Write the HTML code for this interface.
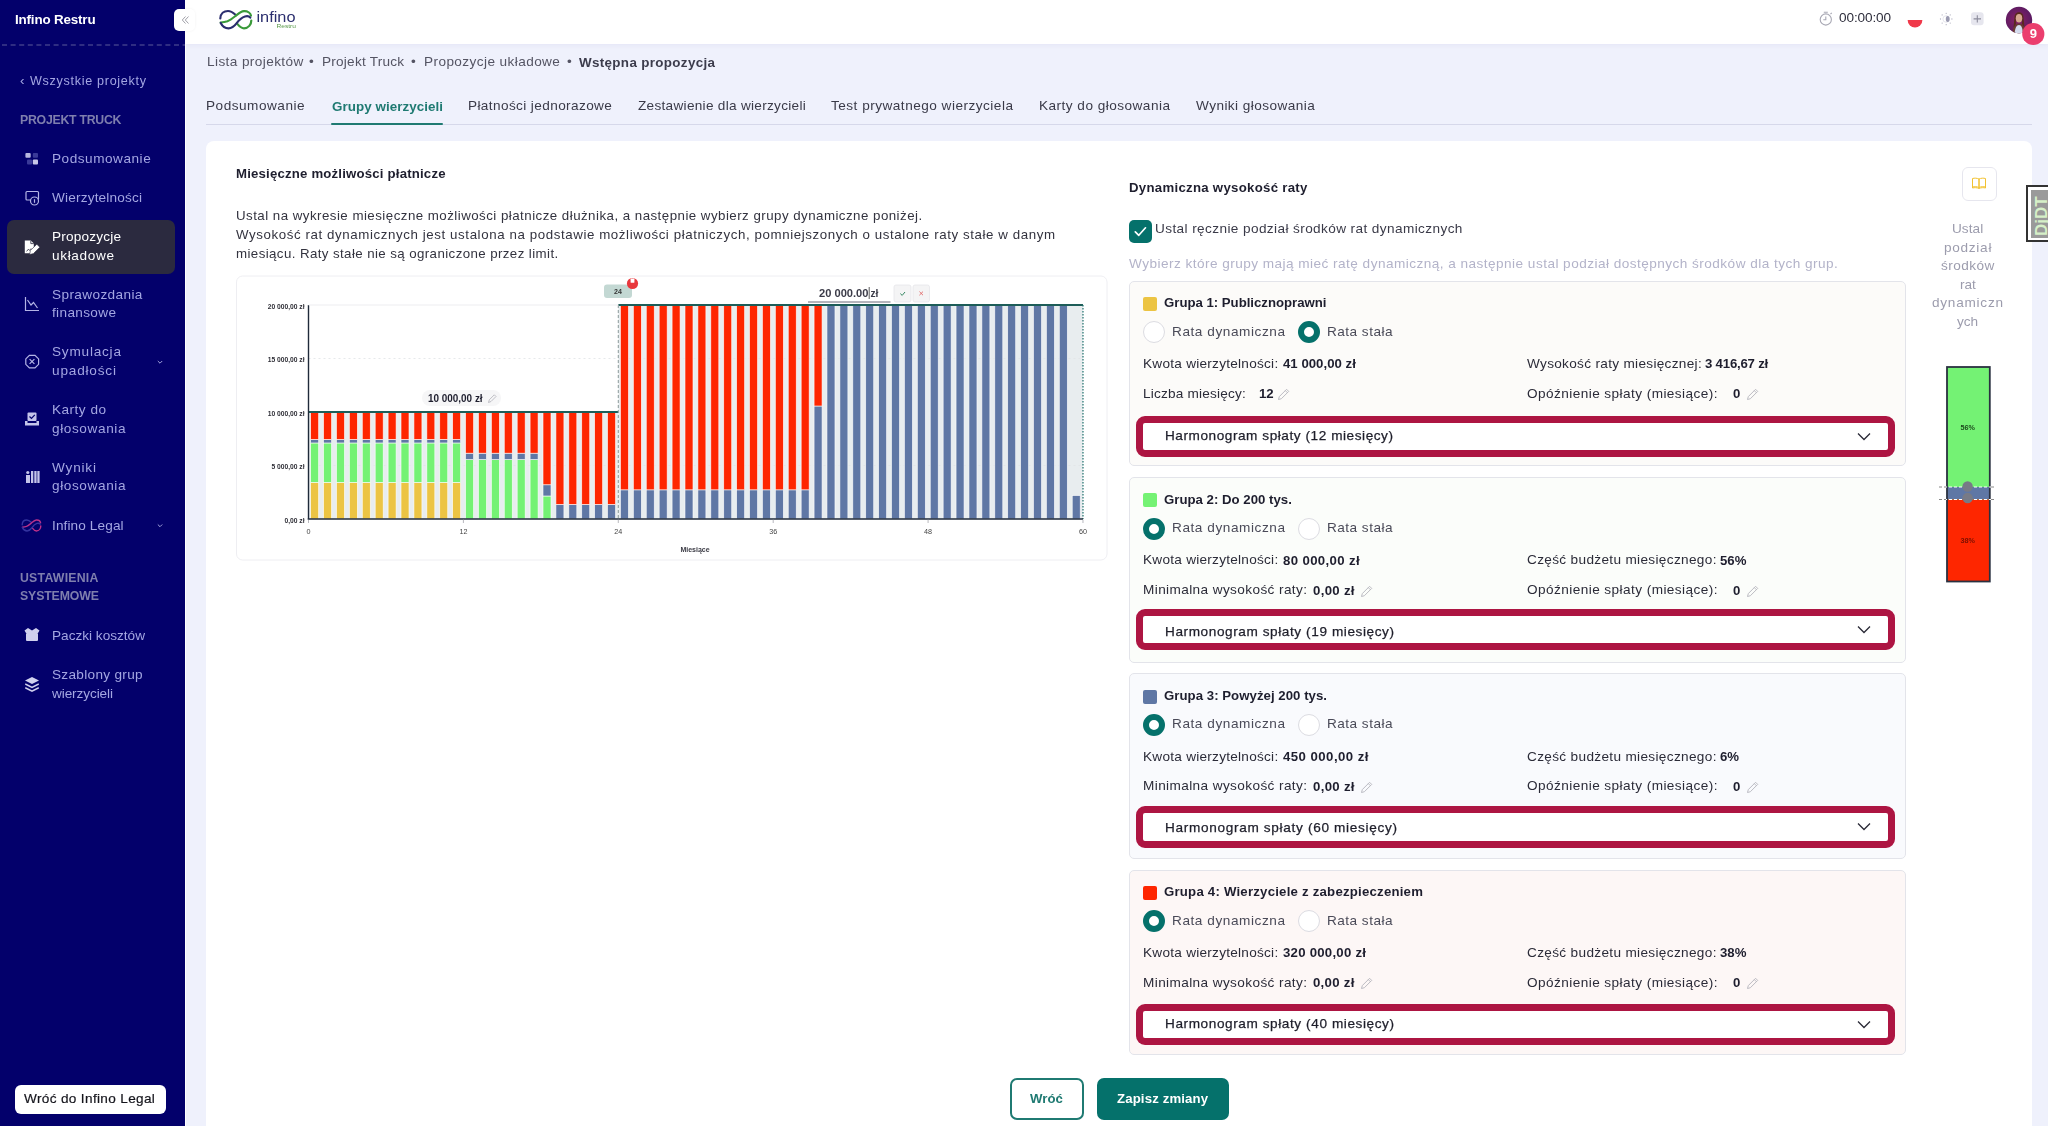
<!DOCTYPE html>
<html lang="pl"><head><meta charset="utf-8"><title>Infino Restru</title>
<style>
html,body{margin:0;padding:0;width:2048px;height:1134px;overflow:hidden;background:#fff;font-family:"Liberation Sans",sans-serif;}
.t{position:absolute;white-space:nowrap;will-change:transform;}
.abs{position:absolute;}
svg{will-change:transform;}
#sidebar{position:absolute;left:0;top:0;width:185px;height:1126px;background:#03006b;}
#lav{position:absolute;left:186px;top:0;width:1862px;height:1126px;background:#eff1fc;}
#header{position:absolute;left:185px;top:0;width:1863px;height:44px;background:#fff;box-shadow:0 1px 5px rgba(90,70,150,0.07);}
#card{position:absolute;left:206px;top:141px;width:1826px;height:1000px;background:#fff;border-radius:8px;}
.gcard{position:absolute;left:1129px;width:776.5px;height:185.5px;border:1px solid #e3e4ea;border-radius:5px;box-sizing:border-box;}
.harm{position:absolute;left:1136px;width:759px;height:41.2px;border:7.6px solid #ad1542;border-radius:9px;box-sizing:border-box;background:#fff;}
.radio{position:absolute;width:22px;height:22px;border-radius:50%;box-sizing:border-box;}
.roff{border:1.2px solid #dcdce2;background:#fff;}
.ron{border:6px solid #05716b;background:#fff;}
.sq{position:absolute;left:1143.3px;width:14px;height:14px;border-radius:2px;}
</style></head>
<body>
<div id="lav"></div>
<div id="header"></div>
<div id="sidebar"></div>
<!-- sidebar dashed separator -->
<svg class="abs" style="left:0;top:0" width="186" height="60">
  <line x1="2" y1="45" x2="185" y2="45" stroke="#5c5a9a" stroke-width="1.2" stroke-dasharray="5 3.6"/>
</svg>
<!-- active item -->
<div class="abs" style="left:7.4px;top:220px;width:168px;height:53.6px;background:#2b2a3f;border-radius:7px;"></div>
<!-- collapse btn -->
<div class="abs" style="left:174px;top:9.3px;width:21px;height:21.5px;background:#fff;border-radius:5px;box-shadow:0 0 3px rgba(0,0,0,0.06)"></div>
<svg class="abs" style="left:178px;top:13px" width="14" height="14"><path d="M7.5 3.5 L4.3 7 L7.5 10.5 M10.5 3.5 L7.3 7 L10.5 10.5" fill="none" stroke="#a0a0a8" stroke-width="1"/></svg>

<!-- sidebar icons -->
<svg class="abs" style="left:0;top:0" width="185" height="720">
  <g fill="#b4b4e6">
    <!-- podsumowanie grid -->
    <rect x="25.4" y="152.9" width="5.3" height="4.8" rx="1" fill="#b8b8e0"/>
    <rect x="32.8" y="152.9" width="5.2" height="4.8" rx="1" fill="#3a3a98"/>
    <rect x="27" y="159.6" width="5" height="5" rx="1" fill="#3a3a98"/>
    <rect x="32.8" y="159.6" width="5.2" height="4.9" rx="1" fill="#c8c8e8"/>
  </g>
  <g fill="none" stroke="#b4b4e6" stroke-width="1.2">
    <!-- wierzytelnosci -->
    <rect x="26" y="191.5" width="12.5" height="8.5" rx="1"/>
    <circle cx="34.5" cy="201" r="4" fill="#03006b"/>
    <line x1="34.5" y1="199.2" x2="34.5" y2="202.8"/>
    <!-- sprawozdania chart -->
    <path d="M25.5 297 V310.5 H39 M27.5 300 L31 305 L33.5 302.5 L37.5 308"/>
    <!-- symulacja x in circle -->
    <path d="M29.4 355.3 H35 L38.6 358.9 V364.3 L35 367.9 H29.4 L25.8 364.3 V358.9 Z"/>
    <path d="M29.6 359.1 L34.4 363.9 M34.4 359.1 L29.6 363.9"/>
    <!-- chevrons -->
    <path d="M157.8 361 L160 363.2 L162.2 361" stroke-width="0.9"/>
    <path d="M157.8 524.5 L160 526.7 L162.2 524.5" stroke-width="0.9"/>
  </g>
  <!-- karty -->
  <g fill="#c4c4ea">
    <path d="M25 421 H27.5 V423 H36.5 V421 H39 V425.5 H25 Z"/>
    <rect x="27.5" y="412.5" width="9" height="8.5" rx="1"/>
  </g>
  <path d="M29.5 416.5 L31.5 418.5 L34.8 414.8" fill="none" stroke="#03006b" stroke-width="1.2"/>
  <!-- wyniki -->
  <g fill="#c4c4ea">
    <circle cx="27.8" cy="472.5" r="1.6"/>
    <rect x="26" y="475" width="4" height="8"/>
    <rect x="31" y="471" width="2.3" height="12"/>
    <rect x="34.3" y="471" width="2.3" height="12"/>
    <rect x="37.3" y="471" width="2.3" height="12"/>
  </g>
  <!-- infino legal -->
  <g transform="translate(19.0 516.1) scale(0.6 0.636)" fill="none" stroke-width="2.3" stroke-linecap="round">
    <path d="M36.3 15.5 C36.3 19.5 33.5 23.3 29 23.3 C26 23.3 24 21 22.3 18.9" stroke="#c2308a"/>
    <path d="M5.3 13.5 C5.5 8.5 9 6 13 6 C16.5 6 18.5 8 21 10.2" stroke="#3434a0"/>
    <path d="M5.7 17.5 C8 17.3 10 17 12.5 16.2 C15.5 15 18 13 20.5 11 C23 9 25.5 6.5 29 6.2 C32.5 6 35.5 8 36 10.6" stroke="#b8308a"/>
    <path d="M5.7 18 C7.5 21.5 10 23.3 13.5 23.3 C17 23.3 19.5 21 21.5 18.4 C24 15 27 12.3 30 11.5 C32 11 34 11 35.3 12.6" stroke="#3434a0"/>
  </g>
  <!-- paczki -->
  <g fill="#d0d0ee">
    <path d="M24.5 630.5 L28 628 L32 630.5 L36 628 L39.5 630.5 L38 633 H26 Z"/>
    <rect x="26" y="633" width="12" height="8" rx="1"/>
  </g>
  <!-- szablony layers -->
  <g fill="#d0d0ee">
    <path d="M32 677 L39 680.5 L32 684 L25 680.5 Z"/>
    <path d="M25.5 683.3 L32 686.6 L38.5 683.3 L39 684.8 L32 688.3 L25 684.8 Z"/>
    <path d="M25.5 687 L32 690.3 L38.5 687 L39 688.5 L32 692 L25 688.5 Z"/>
  </g>
  <!-- propozycje icon (white) -->
  <path d="M24.8 240.6 H30.8 L33.8 243.6 V253.2 H24.8 Z" fill="#fff"/>
  <path d="M30.8 240.6 V243.6 H33.8" fill="none" stroke="#2b2a3f" stroke-width="0.8"/>
  <path d="M26.6 251.4 L28.4 249.2 L29.6 250.4 L31.2 248.4" fill="none" stroke="#2b2a3f" stroke-width="0.8"/>
  <path d="M30.4 250.6 L36.8 244.2 L39.8 247.2 L33.4 253.6 L29.6 254.6 Z" fill="#fff" stroke="#2b2a3f" stroke-width="0.6"/>
</svg>

<!-- wroc do infino legal button -->
<div class="abs" style="left:14.6px;top:1085.4px;width:151px;height:28.3px;background:#fff;border-radius:6px;"></div>

<!-- logo -->
<svg class="abs" style="left:215px;top:5px" width="90" height="30">
  <g fill="none" stroke-width="2.2" stroke-linecap="round">
  <path d="M36.3 15.5 C36.3 19.5 33.5 23.3 29 23.3 C26 23.3 24 21 22.3 18.9" stroke="#3a9a3a"/>
  <path d="M5.3 13.5 C5.5 8.5 9 6 13 6 C16.5 6 18.5 8 21 10.2" stroke="#2b2e6e"/>
  <path d="M5.7 17.5 C8 17.3 10 17 12.5 16.2 C15.5 15 18 13 20.5 11 C23 9 25.5 6.5 29 6.2 C32.5 6 35.5 8 36 10.6" stroke="#3a9a3a"/>
  <path d="M5.7 18 C7.5 21.5 10 23.3 13.5 23.3 C17 23.3 19.5 21 21.5 18.4 C24 15 27 12.3 30 11.5 C32 11 34 11 35.3 12.6" stroke="#2b2e6e"/>
  </g>
  <text x="41.5" y="16.8" font-family="Liberation Sans" font-size="15.2" fill="#2b2e6e" textLength="39" lengthAdjust="spacingAndGlyphs">infino</text>
  <text x="61.5" y="23.2" font-family="Liberation Sans" font-size="5.8" fill="#5a9a4a" textLength="19.5" lengthAdjust="spacingAndGlyphs">Restru</text>
</svg>

<!-- top right icons -->
<svg class="abs" style="left:1810px;top:0" width="238" height="50">
  <g fill="none" stroke="#a8a8b4" stroke-width="1.1">
    <circle cx="15.8" cy="19.5" r="5.6"/>
    <path d="M15.8 16.5 V19.8 H13.3 M13.8 12.2 H17.8 M20.5 14 L21.8 12.8"/>
  </g>
  
  <path d="M97.6 20 A7.4 7.4 0 0 0 112.4 20 Z" fill="#f0394a"/>
  <circle cx="136.2" cy="19" r="3.3" fill="none" stroke="#e2e2ea" stroke-width="0.9"/>
  <ellipse cx="137.7" cy="19" rx="1.9" ry="2.9" fill="#9a9ab0"/>
  <g fill="#b4b4c4"><circle cx="141.90" cy="19.00" r="0.65"/><circle cx="140.23" cy="23.03" r="0.65"/><circle cx="136.20" cy="24.70" r="0.65"/><circle cx="132.17" cy="23.03" r="0.65"/><circle cx="130.50" cy="19.00" r="0.65"/><circle cx="132.17" cy="14.97" r="0.65"/><circle cx="136.20" cy="13.30" r="0.65"/><circle cx="140.23" cy="14.97" r="0.65"/></g>
  <rect x="161" y="12.3" width="12.6" height="13" rx="3" fill="#e6e6ee"/>
  <path d="M167.3 15.2 V22.6 M163.6 18.9 H171" stroke="#8c8c9c" stroke-width="1.1"/>
  <!-- avatar -->
  <defs>
    <radialGradient id="avg" cx="0.45" cy="0.5" r="0.6">
      <stop offset="0" stop-color="#8a2266"/><stop offset="1" stop-color="#561a62"/>
    </radialGradient>
    <clipPath id="avc"><circle cx="209" cy="20" r="13.2"/></clipPath>
  </defs>
  <circle cx="209" cy="20" r="13.2" fill="url(#avg)"/>
  <g clip-path="url(#avc)">
    <path d="M202.5 34 C202.5 27 204.5 23.5 209 23.5 C213.5 23.5 215.5 27 215.5 34 Z" fill="#6a3a34"/>
    <path d="M204.5 34 C205 28 206.5 25 209 25 C211.5 25 212.5 28 213 34 Z" fill="#d4dcee"/>
    <path d="M204.5 17 C204.5 10.5 213.5 10.5 213.5 17 L214.5 27.5 L212 24 L212.2 17.5 C211 14 207 14 205.8 17.5 L206 24 L203.5 27.5 Z" fill="#5a2a1e"/>
    <ellipse cx="209" cy="18.2" rx="3.2" ry="4.2" fill="#d8a890"/>
  </g>
  <circle cx="223.3" cy="34" r="11.1" fill="#eb3e6e"/>
  <text x="223.3" y="38.3" text-anchor="middle" font-family="Liberation Sans" font-weight="700" font-size="13" fill="#fff">9</text>
</svg>

<!-- main card -->
<div id="card"></div>
<!-- tab line -->
<div class="abs" style="left:206px;top:123.5px;width:1826px;height:1px;background:#d6d8ea;"></div>
<div class="abs" style="left:331.4px;top:122.5px;width:111.3px;height:2px;background:#1f7a72;border-radius:1px;"></div>

<svg class='chart' width='2048' height='1134' viewBox='0 0 2048 1134' style='position:absolute;left:0;top:0;pointer-events:none'>
<rect x='236.5' y='276.0' width='870.5' height='284.0' rx='6' fill='#fff' stroke='#eeeef2' stroke-width='1'/>
<rect x='308.5' y='412.0' width='309.792' height='107.0' fill='#e8edef'/>
<rect x='618.2919999999999' y='305.0' width='464.688' height='214.0' fill='#e8edef'/>
<line x1='308.5' y1='465.5' x2='1082.98' y2='465.5' stroke='#dfe3e6' stroke-width='0.8' stroke-dasharray='2 3'/>
<line x1='308.5' y1='358.5' x2='1082.98' y2='358.5' stroke='#dfe3e6' stroke-width='0.8' stroke-dasharray='2 3'/>
<rect x='310.65' y='482.44' width='8.0' height='36.56' fill='#ecc443' stroke='#ffffff' stroke-width='0.7' stroke-opacity='0.85'/>
<rect x='310.65' y='442.96' width='8.0' height='39.48' fill='#74f274' stroke='#ffffff' stroke-width='0.7' stroke-opacity='0.85'/>
<rect x='310.65' y='439.43' width='8.0' height='3.53' fill='#5f77a5' stroke='#ffffff' stroke-width='0.7' stroke-opacity='0.85'/>
<rect x='310.65' y='412.00' width='8.0' height='27.43' fill='#fe2600' stroke='#ffffff' stroke-width='0.7' stroke-opacity='0.85'/>
<rect x='323.56' y='482.44' width='8.0' height='36.56' fill='#ecc443' stroke='#ffffff' stroke-width='0.7' stroke-opacity='0.85'/>
<rect x='323.56' y='442.96' width='8.0' height='39.48' fill='#74f274' stroke='#ffffff' stroke-width='0.7' stroke-opacity='0.85'/>
<rect x='323.56' y='439.43' width='8.0' height='3.53' fill='#5f77a5' stroke='#ffffff' stroke-width='0.7' stroke-opacity='0.85'/>
<rect x='323.56' y='412.00' width='8.0' height='27.43' fill='#fe2600' stroke='#ffffff' stroke-width='0.7' stroke-opacity='0.85'/>
<rect x='336.47' y='482.44' width='8.0' height='36.56' fill='#ecc443' stroke='#ffffff' stroke-width='0.7' stroke-opacity='0.85'/>
<rect x='336.47' y='442.96' width='8.0' height='39.48' fill='#74f274' stroke='#ffffff' stroke-width='0.7' stroke-opacity='0.85'/>
<rect x='336.47' y='439.43' width='8.0' height='3.53' fill='#5f77a5' stroke='#ffffff' stroke-width='0.7' stroke-opacity='0.85'/>
<rect x='336.47' y='412.00' width='8.0' height='27.43' fill='#fe2600' stroke='#ffffff' stroke-width='0.7' stroke-opacity='0.85'/>
<rect x='349.38' y='482.44' width='8.0' height='36.56' fill='#ecc443' stroke='#ffffff' stroke-width='0.7' stroke-opacity='0.85'/>
<rect x='349.38' y='442.96' width='8.0' height='39.48' fill='#74f274' stroke='#ffffff' stroke-width='0.7' stroke-opacity='0.85'/>
<rect x='349.38' y='439.43' width='8.0' height='3.53' fill='#5f77a5' stroke='#ffffff' stroke-width='0.7' stroke-opacity='0.85'/>
<rect x='349.38' y='412.00' width='8.0' height='27.43' fill='#fe2600' stroke='#ffffff' stroke-width='0.7' stroke-opacity='0.85'/>
<rect x='362.29' y='482.44' width='8.0' height='36.56' fill='#ecc443' stroke='#ffffff' stroke-width='0.7' stroke-opacity='0.85'/>
<rect x='362.29' y='442.96' width='8.0' height='39.48' fill='#74f274' stroke='#ffffff' stroke-width='0.7' stroke-opacity='0.85'/>
<rect x='362.29' y='439.43' width='8.0' height='3.53' fill='#5f77a5' stroke='#ffffff' stroke-width='0.7' stroke-opacity='0.85'/>
<rect x='362.29' y='412.00' width='8.0' height='27.43' fill='#fe2600' stroke='#ffffff' stroke-width='0.7' stroke-opacity='0.85'/>
<rect x='375.19' y='482.44' width='8.0' height='36.56' fill='#ecc443' stroke='#ffffff' stroke-width='0.7' stroke-opacity='0.85'/>
<rect x='375.19' y='442.96' width='8.0' height='39.48' fill='#74f274' stroke='#ffffff' stroke-width='0.7' stroke-opacity='0.85'/>
<rect x='375.19' y='439.43' width='8.0' height='3.53' fill='#5f77a5' stroke='#ffffff' stroke-width='0.7' stroke-opacity='0.85'/>
<rect x='375.19' y='412.00' width='8.0' height='27.43' fill='#fe2600' stroke='#ffffff' stroke-width='0.7' stroke-opacity='0.85'/>
<rect x='388.10' y='482.44' width='8.0' height='36.56' fill='#ecc443' stroke='#ffffff' stroke-width='0.7' stroke-opacity='0.85'/>
<rect x='388.10' y='442.96' width='8.0' height='39.48' fill='#74f274' stroke='#ffffff' stroke-width='0.7' stroke-opacity='0.85'/>
<rect x='388.10' y='439.43' width='8.0' height='3.53' fill='#5f77a5' stroke='#ffffff' stroke-width='0.7' stroke-opacity='0.85'/>
<rect x='388.10' y='412.00' width='8.0' height='27.43' fill='#fe2600' stroke='#ffffff' stroke-width='0.7' stroke-opacity='0.85'/>
<rect x='401.01' y='482.44' width='8.0' height='36.56' fill='#ecc443' stroke='#ffffff' stroke-width='0.7' stroke-opacity='0.85'/>
<rect x='401.01' y='442.96' width='8.0' height='39.48' fill='#74f274' stroke='#ffffff' stroke-width='0.7' stroke-opacity='0.85'/>
<rect x='401.01' y='439.43' width='8.0' height='3.53' fill='#5f77a5' stroke='#ffffff' stroke-width='0.7' stroke-opacity='0.85'/>
<rect x='401.01' y='412.00' width='8.0' height='27.43' fill='#fe2600' stroke='#ffffff' stroke-width='0.7' stroke-opacity='0.85'/>
<rect x='413.92' y='482.44' width='8.0' height='36.56' fill='#ecc443' stroke='#ffffff' stroke-width='0.7' stroke-opacity='0.85'/>
<rect x='413.92' y='442.96' width='8.0' height='39.48' fill='#74f274' stroke='#ffffff' stroke-width='0.7' stroke-opacity='0.85'/>
<rect x='413.92' y='439.43' width='8.0' height='3.53' fill='#5f77a5' stroke='#ffffff' stroke-width='0.7' stroke-opacity='0.85'/>
<rect x='413.92' y='412.00' width='8.0' height='27.43' fill='#fe2600' stroke='#ffffff' stroke-width='0.7' stroke-opacity='0.85'/>
<rect x='426.83' y='482.44' width='8.0' height='36.56' fill='#ecc443' stroke='#ffffff' stroke-width='0.7' stroke-opacity='0.85'/>
<rect x='426.83' y='442.96' width='8.0' height='39.48' fill='#74f274' stroke='#ffffff' stroke-width='0.7' stroke-opacity='0.85'/>
<rect x='426.83' y='439.43' width='8.0' height='3.53' fill='#5f77a5' stroke='#ffffff' stroke-width='0.7' stroke-opacity='0.85'/>
<rect x='426.83' y='412.00' width='8.0' height='27.43' fill='#fe2600' stroke='#ffffff' stroke-width='0.7' stroke-opacity='0.85'/>
<rect x='439.73' y='482.44' width='8.0' height='36.56' fill='#ecc443' stroke='#ffffff' stroke-width='0.7' stroke-opacity='0.85'/>
<rect x='439.73' y='442.96' width='8.0' height='39.48' fill='#74f274' stroke='#ffffff' stroke-width='0.7' stroke-opacity='0.85'/>
<rect x='439.73' y='439.43' width='8.0' height='3.53' fill='#5f77a5' stroke='#ffffff' stroke-width='0.7' stroke-opacity='0.85'/>
<rect x='439.73' y='412.00' width='8.0' height='27.43' fill='#fe2600' stroke='#ffffff' stroke-width='0.7' stroke-opacity='0.85'/>
<rect x='452.64' y='482.44' width='8.0' height='36.56' fill='#ecc443' stroke='#ffffff' stroke-width='0.7' stroke-opacity='0.85'/>
<rect x='452.64' y='442.96' width='8.0' height='39.48' fill='#74f274' stroke='#ffffff' stroke-width='0.7' stroke-opacity='0.85'/>
<rect x='452.64' y='439.43' width='8.0' height='3.53' fill='#5f77a5' stroke='#ffffff' stroke-width='0.7' stroke-opacity='0.85'/>
<rect x='452.64' y='412.00' width='8.0' height='27.43' fill='#fe2600' stroke='#ffffff' stroke-width='0.7' stroke-opacity='0.85'/>
<rect x='465.55' y='459.62' width='8.0' height='59.38' fill='#74f274' stroke='#ffffff' stroke-width='0.7' stroke-opacity='0.85'/>
<rect x='465.55' y='453.19' width='8.0' height='6.42' fill='#5f77a5' stroke='#ffffff' stroke-width='0.7' stroke-opacity='0.85'/>
<rect x='465.55' y='412.00' width='8.0' height='41.20' fill='#fe2600' stroke='#ffffff' stroke-width='0.7' stroke-opacity='0.85'/>
<rect x='478.46' y='459.62' width='8.0' height='59.38' fill='#74f274' stroke='#ffffff' stroke-width='0.7' stroke-opacity='0.85'/>
<rect x='478.46' y='453.19' width='8.0' height='6.42' fill='#5f77a5' stroke='#ffffff' stroke-width='0.7' stroke-opacity='0.85'/>
<rect x='478.46' y='412.00' width='8.0' height='41.20' fill='#fe2600' stroke='#ffffff' stroke-width='0.7' stroke-opacity='0.85'/>
<rect x='491.37' y='459.62' width='8.0' height='59.38' fill='#74f274' stroke='#ffffff' stroke-width='0.7' stroke-opacity='0.85'/>
<rect x='491.37' y='453.19' width='8.0' height='6.42' fill='#5f77a5' stroke='#ffffff' stroke-width='0.7' stroke-opacity='0.85'/>
<rect x='491.37' y='412.00' width='8.0' height='41.20' fill='#fe2600' stroke='#ffffff' stroke-width='0.7' stroke-opacity='0.85'/>
<rect x='504.27' y='459.62' width='8.0' height='59.38' fill='#74f274' stroke='#ffffff' stroke-width='0.7' stroke-opacity='0.85'/>
<rect x='504.27' y='453.19' width='8.0' height='6.42' fill='#5f77a5' stroke='#ffffff' stroke-width='0.7' stroke-opacity='0.85'/>
<rect x='504.27' y='412.00' width='8.0' height='41.20' fill='#fe2600' stroke='#ffffff' stroke-width='0.7' stroke-opacity='0.85'/>
<rect x='517.18' y='459.62' width='8.0' height='59.38' fill='#74f274' stroke='#ffffff' stroke-width='0.7' stroke-opacity='0.85'/>
<rect x='517.18' y='453.19' width='8.0' height='6.42' fill='#5f77a5' stroke='#ffffff' stroke-width='0.7' stroke-opacity='0.85'/>
<rect x='517.18' y='412.00' width='8.0' height='41.20' fill='#fe2600' stroke='#ffffff' stroke-width='0.7' stroke-opacity='0.85'/>
<rect x='530.09' y='459.62' width='8.0' height='59.38' fill='#74f274' stroke='#ffffff' stroke-width='0.7' stroke-opacity='0.85'/>
<rect x='530.09' y='453.19' width='8.0' height='6.42' fill='#5f77a5' stroke='#ffffff' stroke-width='0.7' stroke-opacity='0.85'/>
<rect x='530.09' y='412.00' width='8.0' height='41.20' fill='#fe2600' stroke='#ffffff' stroke-width='0.7' stroke-opacity='0.85'/>
<rect x='543.00' y='496.00' width='8.0' height='23.00' fill='#74f274' stroke='#ffffff' stroke-width='0.7' stroke-opacity='0.85'/>
<rect x='543.00' y='484.76' width='8.0' height='11.23' fill='#5f77a5' stroke='#ffffff' stroke-width='0.7' stroke-opacity='0.85'/>
<rect x='543.00' y='412.00' width='8.0' height='72.76' fill='#fe2600' stroke='#ffffff' stroke-width='0.7' stroke-opacity='0.85'/>
<rect x='555.91' y='504.41' width='8.0' height='14.59' fill='#5f77a5' stroke='#ffffff' stroke-width='0.7' stroke-opacity='0.85'/>
<rect x='555.91' y='412.00' width='8.0' height='92.41' fill='#fe2600' stroke='#ffffff' stroke-width='0.7' stroke-opacity='0.85'/>
<rect x='568.81' y='504.41' width='8.0' height='14.59' fill='#5f77a5' stroke='#ffffff' stroke-width='0.7' stroke-opacity='0.85'/>
<rect x='568.81' y='412.00' width='8.0' height='92.41' fill='#fe2600' stroke='#ffffff' stroke-width='0.7' stroke-opacity='0.85'/>
<rect x='581.72' y='504.41' width='8.0' height='14.59' fill='#5f77a5' stroke='#ffffff' stroke-width='0.7' stroke-opacity='0.85'/>
<rect x='581.72' y='412.00' width='8.0' height='92.41' fill='#fe2600' stroke='#ffffff' stroke-width='0.7' stroke-opacity='0.85'/>
<rect x='594.63' y='504.41' width='8.0' height='14.59' fill='#5f77a5' stroke='#ffffff' stroke-width='0.7' stroke-opacity='0.85'/>
<rect x='594.63' y='412.00' width='8.0' height='92.41' fill='#fe2600' stroke='#ffffff' stroke-width='0.7' stroke-opacity='0.85'/>
<rect x='607.54' y='504.41' width='8.0' height='14.59' fill='#5f77a5' stroke='#ffffff' stroke-width='0.7' stroke-opacity='0.85'/>
<rect x='607.54' y='412.00' width='8.0' height='92.41' fill='#fe2600' stroke='#ffffff' stroke-width='0.7' stroke-opacity='0.85'/>
<rect x='620.45' y='489.82' width='8.0' height='29.18' fill='#5f77a5' stroke='#ffffff' stroke-width='0.7' stroke-opacity='0.85'/>
<rect x='620.45' y='305.00' width='8.0' height='184.82' fill='#fe2600' stroke='#ffffff' stroke-width='0.7' stroke-opacity='0.85'/>
<rect x='633.35' y='489.82' width='8.0' height='29.18' fill='#5f77a5' stroke='#ffffff' stroke-width='0.7' stroke-opacity='0.85'/>
<rect x='633.35' y='305.00' width='8.0' height='184.82' fill='#fe2600' stroke='#ffffff' stroke-width='0.7' stroke-opacity='0.85'/>
<rect x='646.26' y='489.82' width='8.0' height='29.18' fill='#5f77a5' stroke='#ffffff' stroke-width='0.7' stroke-opacity='0.85'/>
<rect x='646.26' y='305.00' width='8.0' height='184.82' fill='#fe2600' stroke='#ffffff' stroke-width='0.7' stroke-opacity='0.85'/>
<rect x='659.17' y='489.82' width='8.0' height='29.18' fill='#5f77a5' stroke='#ffffff' stroke-width='0.7' stroke-opacity='0.85'/>
<rect x='659.17' y='305.00' width='8.0' height='184.82' fill='#fe2600' stroke='#ffffff' stroke-width='0.7' stroke-opacity='0.85'/>
<rect x='672.08' y='489.82' width='8.0' height='29.18' fill='#5f77a5' stroke='#ffffff' stroke-width='0.7' stroke-opacity='0.85'/>
<rect x='672.08' y='305.00' width='8.0' height='184.82' fill='#fe2600' stroke='#ffffff' stroke-width='0.7' stroke-opacity='0.85'/>
<rect x='684.99' y='489.82' width='8.0' height='29.18' fill='#5f77a5' stroke='#ffffff' stroke-width='0.7' stroke-opacity='0.85'/>
<rect x='684.99' y='305.00' width='8.0' height='184.82' fill='#fe2600' stroke='#ffffff' stroke-width='0.7' stroke-opacity='0.85'/>
<rect x='697.89' y='489.82' width='8.0' height='29.18' fill='#5f77a5' stroke='#ffffff' stroke-width='0.7' stroke-opacity='0.85'/>
<rect x='697.89' y='305.00' width='8.0' height='184.82' fill='#fe2600' stroke='#ffffff' stroke-width='0.7' stroke-opacity='0.85'/>
<rect x='710.80' y='489.82' width='8.0' height='29.18' fill='#5f77a5' stroke='#ffffff' stroke-width='0.7' stroke-opacity='0.85'/>
<rect x='710.80' y='305.00' width='8.0' height='184.82' fill='#fe2600' stroke='#ffffff' stroke-width='0.7' stroke-opacity='0.85'/>
<rect x='723.71' y='489.82' width='8.0' height='29.18' fill='#5f77a5' stroke='#ffffff' stroke-width='0.7' stroke-opacity='0.85'/>
<rect x='723.71' y='305.00' width='8.0' height='184.82' fill='#fe2600' stroke='#ffffff' stroke-width='0.7' stroke-opacity='0.85'/>
<rect x='736.62' y='489.82' width='8.0' height='29.18' fill='#5f77a5' stroke='#ffffff' stroke-width='0.7' stroke-opacity='0.85'/>
<rect x='736.62' y='305.00' width='8.0' height='184.82' fill='#fe2600' stroke='#ffffff' stroke-width='0.7' stroke-opacity='0.85'/>
<rect x='749.53' y='489.82' width='8.0' height='29.18' fill='#5f77a5' stroke='#ffffff' stroke-width='0.7' stroke-opacity='0.85'/>
<rect x='749.53' y='305.00' width='8.0' height='184.82' fill='#fe2600' stroke='#ffffff' stroke-width='0.7' stroke-opacity='0.85'/>
<rect x='762.43' y='489.82' width='8.0' height='29.18' fill='#5f77a5' stroke='#ffffff' stroke-width='0.7' stroke-opacity='0.85'/>
<rect x='762.43' y='305.00' width='8.0' height='184.82' fill='#fe2600' stroke='#ffffff' stroke-width='0.7' stroke-opacity='0.85'/>
<rect x='775.34' y='489.82' width='8.0' height='29.18' fill='#5f77a5' stroke='#ffffff' stroke-width='0.7' stroke-opacity='0.85'/>
<rect x='775.34' y='305.00' width='8.0' height='184.82' fill='#fe2600' stroke='#ffffff' stroke-width='0.7' stroke-opacity='0.85'/>
<rect x='788.25' y='489.82' width='8.0' height='29.18' fill='#5f77a5' stroke='#ffffff' stroke-width='0.7' stroke-opacity='0.85'/>
<rect x='788.25' y='305.00' width='8.0' height='184.82' fill='#fe2600' stroke='#ffffff' stroke-width='0.7' stroke-opacity='0.85'/>
<rect x='801.16' y='489.82' width='8.0' height='29.18' fill='#5f77a5' stroke='#ffffff' stroke-width='0.7' stroke-opacity='0.85'/>
<rect x='801.16' y='305.00' width='8.0' height='184.82' fill='#fe2600' stroke='#ffffff' stroke-width='0.7' stroke-opacity='0.85'/>
<rect x='814.07' y='406.01' width='8.0' height='112.99' fill='#5f77a5' stroke='#ffffff' stroke-width='0.7' stroke-opacity='0.85'/>
<rect x='814.07' y='305.00' width='8.0' height='101.01' fill='#fe2600' stroke='#ffffff' stroke-width='0.7' stroke-opacity='0.85'/>
<rect x='826.97' y='305.00' width='8.0' height='214.00' fill='#5f77a5' stroke='#ffffff' stroke-width='0.7' stroke-opacity='0.85'/>
<rect x='839.88' y='305.00' width='8.0' height='214.00' fill='#5f77a5' stroke='#ffffff' stroke-width='0.7' stroke-opacity='0.85'/>
<rect x='852.79' y='305.00' width='8.0' height='214.00' fill='#5f77a5' stroke='#ffffff' stroke-width='0.7' stroke-opacity='0.85'/>
<rect x='865.70' y='305.00' width='8.0' height='214.00' fill='#5f77a5' stroke='#ffffff' stroke-width='0.7' stroke-opacity='0.85'/>
<rect x='878.61' y='305.00' width='8.0' height='214.00' fill='#5f77a5' stroke='#ffffff' stroke-width='0.7' stroke-opacity='0.85'/>
<rect x='891.51' y='305.00' width='8.0' height='214.00' fill='#5f77a5' stroke='#ffffff' stroke-width='0.7' stroke-opacity='0.85'/>
<rect x='904.42' y='305.00' width='8.0' height='214.00' fill='#5f77a5' stroke='#ffffff' stroke-width='0.7' stroke-opacity='0.85'/>
<rect x='917.33' y='305.00' width='8.0' height='214.00' fill='#5f77a5' stroke='#ffffff' stroke-width='0.7' stroke-opacity='0.85'/>
<rect x='930.24' y='305.00' width='8.0' height='214.00' fill='#5f77a5' stroke='#ffffff' stroke-width='0.7' stroke-opacity='0.85'/>
<rect x='943.15' y='305.00' width='8.0' height='214.00' fill='#5f77a5' stroke='#ffffff' stroke-width='0.7' stroke-opacity='0.85'/>
<rect x='956.05' y='305.00' width='8.0' height='214.00' fill='#5f77a5' stroke='#ffffff' stroke-width='0.7' stroke-opacity='0.85'/>
<rect x='968.96' y='305.00' width='8.0' height='214.00' fill='#5f77a5' stroke='#ffffff' stroke-width='0.7' stroke-opacity='0.85'/>
<rect x='981.87' y='305.00' width='8.0' height='214.00' fill='#5f77a5' stroke='#ffffff' stroke-width='0.7' stroke-opacity='0.85'/>
<rect x='994.78' y='305.00' width='8.0' height='214.00' fill='#5f77a5' stroke='#ffffff' stroke-width='0.7' stroke-opacity='0.85'/>
<rect x='1007.69' y='305.00' width='8.0' height='214.00' fill='#5f77a5' stroke='#ffffff' stroke-width='0.7' stroke-opacity='0.85'/>
<rect x='1020.59' y='305.00' width='8.0' height='214.00' fill='#5f77a5' stroke='#ffffff' stroke-width='0.7' stroke-opacity='0.85'/>
<rect x='1033.50' y='305.00' width='8.0' height='214.00' fill='#5f77a5' stroke='#ffffff' stroke-width='0.7' stroke-opacity='0.85'/>
<rect x='1046.41' y='305.00' width='8.0' height='214.00' fill='#5f77a5' stroke='#ffffff' stroke-width='0.7' stroke-opacity='0.85'/>
<rect x='1059.32' y='305.00' width='8.0' height='214.00' fill='#5f77a5' stroke='#ffffff' stroke-width='0.7' stroke-opacity='0.85'/>
<rect x='1072.23' y='495.57' width='8.0' height='23.43' fill='#5f77a5' stroke='#ffffff' stroke-width='0.7' stroke-opacity='0.85'/>
<line x1='308.5' y1='412.0' x2='618.2919999999999' y2='412.0' stroke='#1d5d58' stroke-width='2.2'/>
<line x1='618.2919999999999' y1='305.0' x2='1082.98' y2='305.0' stroke='#1d5d58' stroke-width='2.2'/>
<line x1='618.2919999999999' y1='305.0' x2='618.2919999999999' y2='519.0' stroke='#8a9a9a' stroke-width='1' stroke-dasharray='3 2'/>
<line x1='1082.98' y1='305.0' x2='1082.98' y2='519.0' stroke='#1d6f6a' stroke-width='1.2' stroke-dasharray='1.5 1.5'/>
<line x1='308.5' y1='305.0' x2='308.5' y2='519.6' stroke='#1f2a3a' stroke-width='1.4'/>
<line x1='307.8' y1='519.0' x2='1082.98' y2='519.0' stroke='#1f2a3a' stroke-width='1.3'/>
<line x1='308.5' y1='305.0' x2='618.2919999999999' y2='305.0' stroke='#ededf0' stroke-width='1'/>
<text x='304.5' y='522.9' text-anchor='end' font-family='Liberation Sans' font-weight='700' font-size='6.7' fill='#2e2e36'>0,00 zł</text>
<text x='304.5' y='469.4' text-anchor='end' font-family='Liberation Sans' font-weight='700' font-size='6.7' fill='#2e2e36'>5 000,00 zł</text>
<text x='304.5' y='415.9' text-anchor='end' font-family='Liberation Sans' font-weight='700' font-size='6.7' fill='#2e2e36'>10 000,00 zł</text>
<text x='304.5' y='362.4' text-anchor='end' font-family='Liberation Sans' font-weight='700' font-size='6.7' fill='#2e2e36'>15 000,00 zł</text>
<text x='304.5' y='308.9' text-anchor='end' font-family='Liberation Sans' font-weight='700' font-size='6.7' fill='#2e2e36'>20 000,00 zł</text>
<text x='308.5' y='533.8' text-anchor='middle' font-family='Liberation Sans' font-size='7.2' fill='#444'>0</text>
<line x1='308.5' y1='519.5' x2='308.5' y2='523.0' stroke='#9a9aa2' stroke-width='0.7'/>
<text x='463.4' y='533.8' text-anchor='middle' font-family='Liberation Sans' font-size='7.2' fill='#444'>12</text>
<line x1='463.39599999999996' y1='519.5' x2='463.39599999999996' y2='523.0' stroke='#9a9aa2' stroke-width='0.7'/>
<text x='618.3' y='533.8' text-anchor='middle' font-family='Liberation Sans' font-size='7.2' fill='#444'>24</text>
<line x1='618.2919999999999' y1='519.5' x2='618.2919999999999' y2='523.0' stroke='#9a9aa2' stroke-width='0.7'/>
<text x='773.2' y='533.8' text-anchor='middle' font-family='Liberation Sans' font-size='7.2' fill='#444'>36</text>
<line x1='773.188' y1='519.5' x2='773.188' y2='523.0' stroke='#9a9aa2' stroke-width='0.7'/>
<text x='928.1' y='533.8' text-anchor='middle' font-family='Liberation Sans' font-size='7.2' fill='#444'>48</text>
<line x1='928.084' y1='519.5' x2='928.084' y2='523.0' stroke='#9a9aa2' stroke-width='0.7'/>
<text x='1083.0' y='533.8' text-anchor='middle' font-family='Liberation Sans' font-size='7.2' fill='#444'>60</text>
<line x1='1082.98' y1='519.5' x2='1082.98' y2='523.0' stroke='#9a9aa2' stroke-width='0.7'/>
<text x='695' y='551.8' text-anchor='middle' font-family='Liberation Sans' font-weight='700' font-size='7' fill='#3a3a44'>Miesiące</text>
<rect x='422' y='390' width='79' height='16' rx='8' fill='#f6f6f7'/>
<text x='428' y='401.8' font-family='Liberation Sans' font-weight='700' font-size='10.2' fill='#1e1e2e' textLength='54.6' lengthAdjust='spacingAndGlyphs'>10 000,00 zł</text>
<path d='M488.5 402.5 L489.3 399.8 L494.3 394.8 L496 396.5 L491 401.5 Z' fill='none' stroke='#b0b0b8' stroke-width='0.8'/>
<rect x='604' y='284.5' width='28' height='13.5' rx='3' fill='#c3d8d3'/>
<text x='618' y='294' text-anchor='middle' font-family='Liberation Sans' font-weight='700' font-size='7' fill='#333'>24</text>
<circle cx='632.5' cy='283.5' r='5.6' fill='#e8383d'/>
<rect x='630.6' y='278.6' width='3.8' height='4.2' rx='0.6' fill='#fff'/>
<line x1='808' y1='302' x2='890.5' y2='302' stroke='#6b6b78' stroke-width='1'/>
<text x='819' y='297' font-family='Liberation Sans' font-weight='700' font-size='10.2' fill='#3b3b48' textLength='49.5' lengthAdjust='spacingAndGlyphs'>20 000.00</text>
<line x1='869.2' y1='287' x2='869.2' y2='299' stroke='#333' stroke-width='0.8'/>
<text x='870.4' y='297' font-family='Liberation Sans' font-weight='700' font-size='10.2' fill='#3b3b48'>zł</text>
<rect x='894' y='285' width='17' height='17' rx='2' fill='#f4f4f5' stroke='#e6e6ea' stroke-width='0.8'/>
<path d='M900.3 293.6 L902.2 295.4 L905 292' fill='none' stroke='#1f7a50' stroke-width='0.9'/>
<rect x='913' y='285' width='16.5' height='17' rx='2' fill='#f4f4f5' stroke='#e6e6ea' stroke-width='0.8'/>
<path d='M919.4 291.6 L923 295.2 M923 291.6 L919.4 295.2' fill='none' stroke='#e05a5a' stroke-width='0.8'/>
</svg>

<!-- book button -->
<div class="abs" style="left:1962px;top:167px;width:35px;height:34px;border:1px solid #e6e6ee;border-radius:6px;box-sizing:border-box;background:#fff;"></div>
<svg class="abs" style="left:1970px;top:175px" width="20" height="18">
  <path d="M2.5 3.5 C4.5 3 7 3 9 4 V12.5 C7 11.5 4.5 11.5 2.5 12 Z M9 4 C11 3 13.5 3 15.5 3.5 V12 C13.5 11.5 11 11.5 9 12.5 Z M2.5 12 V13 C4.5 12.5 7 12.5 9 13.5 C11 12.5 13.5 12.5 15.5 13 V12" fill="none" stroke="#f2c230" stroke-width="1"/>
</svg>

<!-- checkbox -->
<div class="abs" style="left:1129px;top:220px;width:22.5px;height:22.5px;background:#05716b;border-radius:5px;"></div>
<svg class="abs" style="left:1129px;top:220px" width="23" height="23"><path d="M6.3 11.8 L9.8 15.3 L16.5 7.8" fill="none" stroke="#fff" stroke-width="1.7" stroke-linecap="round" stroke-linejoin="round"/></svg>

<div class='gcard' style='top:280.7px;background:#fcfbf9'></div>
<div class='sq' style='top:297.0px;background:#ecc443'></div>
<div class='radio roff' style='left:1143px;top:321.2px'></div>
<div class='radio ron' style='left:1297.7px;top:321.2px'></div>
<div class='harm' style='top:415.6px'></div>
<svg class='abs' style='left:1855px;top:430.6px' width='18' height='12'><path d='M3 2.5 L9 8.5 L15 2.5' fill='none' stroke='#2a2a36' stroke-width='1.3'/></svg>
<svg class='abs' style='left:1276.5px;top:387.2px' width='14' height='14'><path d='M1.5 12.5 L2.3 9.6 L9.6 2.3 L11.7 4.4 L4.4 11.7 Z M8.3 3.6 L10.4 5.7' fill='none' stroke='#b4b4bc' stroke-width='0.9'/></svg>
<svg class='abs' style='left:1746.0px;top:387.2px' width='14' height='14'><path d='M1.5 12.5 L2.3 9.6 L9.6 2.3 L11.7 4.4 L4.4 11.7 Z M8.3 3.6 L10.4 5.7' fill='none' stroke='#b4b4bc' stroke-width='0.9'/></svg>
<div class='gcard' style='top:477.1px;background:#fbfdfa'></div>
<div class='sq' style='top:493.4px;background:#74f274'></div>
<div class='radio ron' style='left:1143px;top:517.6px'></div>
<div class='radio roff' style='left:1297.7px;top:517.6px'></div>
<div class='harm' style='top:609.0px'></div>
<svg class='abs' style='left:1855px;top:624.0px' width='18' height='12'><path d='M3 2.5 L9 8.5 L15 2.5' fill='none' stroke='#2a2a36' stroke-width='1.3'/></svg>
<svg class='abs' style='left:1360.0px;top:583.6px' width='14' height='14'><path d='M1.5 12.5 L2.3 9.6 L9.6 2.3 L11.7 4.4 L4.4 11.7 Z M8.3 3.6 L10.4 5.7' fill='none' stroke='#b4b4bc' stroke-width='0.9'/></svg>
<svg class='abs' style='left:1746.0px;top:583.6px' width='14' height='14'><path d='M1.5 12.5 L2.3 9.6 L9.6 2.3 L11.7 4.4 L4.4 11.7 Z M8.3 3.6 L10.4 5.7' fill='none' stroke='#b4b4bc' stroke-width='0.9'/></svg>
<div class='gcard' style='top:673.3px;background:#f9fafd'></div>
<div class='sq' style='top:689.6px;background:#5f77a5'></div>
<div class='radio ron' style='left:1143px;top:713.8px'></div>
<div class='radio roff' style='left:1297.7px;top:713.8px'></div>
<div class='harm' style='top:806.4px'></div>
<svg class='abs' style='left:1855px;top:821.4px' width='18' height='12'><path d='M3 2.5 L9 8.5 L15 2.5' fill='none' stroke='#2a2a36' stroke-width='1.3'/></svg>
<svg class='abs' style='left:1360.0px;top:779.8px' width='14' height='14'><path d='M1.5 12.5 L2.3 9.6 L9.6 2.3 L11.7 4.4 L4.4 11.7 Z M8.3 3.6 L10.4 5.7' fill='none' stroke='#b4b4bc' stroke-width='0.9'/></svg>
<svg class='abs' style='left:1746.0px;top:779.8px' width='14' height='14'><path d='M1.5 12.5 L2.3 9.6 L9.6 2.3 L11.7 4.4 L4.4 11.7 Z M8.3 3.6 L10.4 5.7' fill='none' stroke='#b4b4bc' stroke-width='0.9'/></svg>
<div class='gcard' style='top:869.5px;background:#fdf7f6'></div>
<div class='sq' style='top:885.8px;background:#fe2600'></div>
<div class='radio ron' style='left:1143px;top:910.0px'></div>
<div class='radio roff' style='left:1297.7px;top:910.0px'></div>
<div class='harm' style='top:1004.0px'></div>
<svg class='abs' style='left:1855px;top:1019.0px' width='18' height='12'><path d='M3 2.5 L9 8.5 L15 2.5' fill='none' stroke='#2a2a36' stroke-width='1.3'/></svg>
<svg class='abs' style='left:1360.0px;top:976.0px' width='14' height='14'><path d='M1.5 12.5 L2.3 9.6 L9.6 2.3 L11.7 4.4 L4.4 11.7 Z M8.3 3.6 L10.4 5.7' fill='none' stroke='#b4b4bc' stroke-width='0.9'/></svg>
<svg class='abs' style='left:1746.0px;top:976.0px' width='14' height='14'><path d='M1.5 12.5 L2.3 9.6 L9.6 2.3 L11.7 4.4 L4.4 11.7 Z M8.3 3.6 L10.4 5.7' fill='none' stroke='#b4b4bc' stroke-width='0.9'/></svg>

<!-- slider -->
<svg class="abs" style="left:1930px;top:355px" width="80" height="240">
  <rect x="17" y="12" width="42.8" height="214.5" fill="#74f274"/>
  <rect x="17" y="132" width="42.8" height="12.5" fill="#5f77a5"/>
  <rect x="17" y="144.5" width="42.8" height="82" fill="#fe2600"/>
  <rect x="17" y="12" width="42.8" height="214.5" fill="none" stroke="#2a3140" stroke-width="1.8"/>
  <line x1="9" y1="132" x2="64" y2="132" stroke="#fff" stroke-width="1" stroke-dasharray="3 2"/>
  <line x1="9" y1="144.5" x2="64" y2="144.5" stroke="#fff" stroke-width="1" stroke-dasharray="3 2"/>
  <line x1="9" y1="132" x2="16" y2="132" stroke="#888" stroke-width="1" stroke-dasharray="3 2"/>
  <line x1="61" y1="132" x2="66" y2="132" stroke="#888" stroke-width="1" stroke-dasharray="3 2"/>
  <line x1="9" y1="144.5" x2="16" y2="144.5" stroke="#888" stroke-width="1" stroke-dasharray="3 2"/>
  <line x1="61" y1="144.5" x2="66" y2="144.5" stroke="#888" stroke-width="1" stroke-dasharray="3 2"/>
  <circle cx="37.6" cy="131.5" r="5.2" fill="#777a86"/>
  <circle cx="37.6" cy="143" r="5.2" fill="#777a86"/>
  <text x="37.6" y="74.8" text-anchor="middle" font-family="Liberation Sans" font-weight="700" font-size="7.2" fill="#1d4a1d">56%</text>
  <text x="37.6" y="188.2" text-anchor="middle" font-family="Liberation Sans" font-weight="700" font-size="7.2" fill="#7a1000">38%</text>
</svg>

<!-- DjDT handle -->
<div class="abs" style="left:2026px;top:185px;width:30px;height:57px;background:#fff;border:2.5px solid #333;box-sizing:border-box;"></div>
<div class="abs" style="left:2031px;top:189.5px;width:25px;height:48px;background:#9a9a9a;"></div>
<div class="abs" style="left:2033px;top:236px;transform:rotate(-90deg);transform-origin:0 0;font-family:'Liberation Sans';font-weight:700;font-size:17px;line-height:17px;color:#d6f0c8;white-space:nowrap;">DjDT</div>

<!-- bottom buttons -->
<div class="abs" style="left:1009.7px;top:1078.2px;width:74.5px;height:41.4px;border:2px solid #1f7a72;border-radius:7px;box-sizing:border-box;background:#fff;"></div>
<div class="abs" style="left:1097.3px;top:1078.2px;width:131.7px;height:41.4px;background:#05716b;border-radius:7px;"></div>

<div class='t' style='left:15.10px;top:12.01px;line-height:16.08px;font-size:13.4px;font-weight:700;color:#ffffff;letter-spacing:-0.165px;'>Infino Restru</div>
<div class='t' style='left:20.00px;top:73.05px;line-height:16.20px;font-size:13.5px;font-weight:400;color:#a4a6e2;letter-spacing:0.000px;'>&lsaquo;</div>
<div class='t' style='left:30.10px;top:73.59px;line-height:15.12px;font-size:12.6px;font-weight:400;color:#a4a6e2;letter-spacing:0.689px;'>Wszystkie projekty</div>
<div class='t' style='left:19.50px;top:112.77px;line-height:14.76px;font-size:12.3px;font-weight:700;color:#7f7fae;letter-spacing:-0.253px;'>PROJEKT TRUCK</div>
<div class='t' style='left:51.80px;top:150.59px;line-height:16.32px;font-size:13.6px;font-weight:400;color:#a4a6e2;letter-spacing:0.522px;'>Podsumowanie</div>
<div class='t' style='left:51.80px;top:189.59px;line-height:16.32px;font-size:13.6px;font-weight:400;color:#a4a6e2;letter-spacing:0.183px;'>Wierzytelności</div>
<div class='t' style='left:51.80px;top:229.39px;line-height:16.32px;font-size:13.6px;font-weight:400;color:#ffffff;letter-spacing:0.194px;'>Propozycje</div>
<div class='t' style='left:51.80px;top:247.79px;line-height:16.32px;font-size:13.6px;font-weight:400;color:#ffffff;letter-spacing:0.652px;'>układowe</div>
<div class='t' style='left:51.80px;top:286.89px;line-height:16.32px;font-size:13.6px;font-weight:400;color:#a4a6e2;letter-spacing:0.386px;'>Sprawozdania</div>
<div class='t' style='left:51.80px;top:305.29px;line-height:16.32px;font-size:13.6px;font-weight:400;color:#a4a6e2;letter-spacing:0.348px;'>finansowe</div>
<div class='t' style='left:51.80px;top:344.39px;line-height:16.32px;font-size:13.6px;font-weight:400;color:#a4a6e2;letter-spacing:0.785px;'>Symulacja</div>
<div class='t' style='left:51.80px;top:362.79px;line-height:16.32px;font-size:13.6px;font-weight:400;color:#a4a6e2;letter-spacing:0.820px;'>upadłości</div>
<div class='t' style='left:51.80px;top:402.39px;line-height:16.32px;font-size:13.6px;font-weight:400;color:#a4a6e2;letter-spacing:0.482px;'>Karty do</div>
<div class='t' style='left:51.80px;top:420.79px;line-height:16.32px;font-size:13.6px;font-weight:400;color:#a4a6e2;letter-spacing:0.609px;'>głosowania</div>
<div class='t' style='left:51.80px;top:460.09px;line-height:16.32px;font-size:13.6px;font-weight:400;color:#a4a6e2;letter-spacing:0.819px;'>Wyniki</div>
<div class='t' style='left:51.80px;top:478.49px;line-height:16.32px;font-size:13.6px;font-weight:400;color:#a4a6e2;letter-spacing:0.609px;'>głosowania</div>
<div class='t' style='left:51.80px;top:517.79px;line-height:16.32px;font-size:13.6px;font-weight:400;color:#a4a6e2;letter-spacing:0.118px;'>Infino Legal</div>
<div class='t' style='left:19.60px;top:570.97px;line-height:14.76px;font-size:12.3px;font-weight:700;color:#7f7fae;letter-spacing:0.234px;'>USTAWIENIA</div>
<div class='t' style='left:19.60px;top:589.47px;line-height:14.76px;font-size:12.3px;font-weight:700;color:#7f7fae;letter-spacing:-0.130px;'>SYSTEMOWE</div>
<div class='t' style='left:51.80px;top:628.39px;line-height:16.32px;font-size:13.6px;font-weight:400;color:#a4a6e2;letter-spacing:0.006px;'>Paczki kosztów</div>
<div class='t' style='left:51.80px;top:667.39px;line-height:16.32px;font-size:13.6px;font-weight:400;color:#a4a6e2;letter-spacing:0.308px;'>Szablony grup</div>
<div class='t' style='left:51.80px;top:685.79px;line-height:16.32px;font-size:13.6px;font-weight:400;color:#a4a6e2;letter-spacing:-0.094px;'>wierzycieli</div>
<div class='t' style='left:24.40px;top:1090.99px;line-height:16.32px;font-size:13.6px;font-weight:400;color:#15151c;letter-spacing:0.340px;-webkit-text-stroke:0.2px #15151c;'>Wróć do Infino Legal</div>
<div class='t' style='left:206.50px;top:54.39px;line-height:16.32px;font-size:13.6px;font-weight:400;color:#545463;letter-spacing:0.402px;'>Lista projektów</div>
<div class='t' style='left:309.32px;top:54.39px;line-height:16.32px;font-size:13.6px;font-weight:400;color:#545463;letter-spacing:0.000px;'>&bull;</div>
<div class='t' style='left:321.60px;top:54.39px;line-height:16.32px;font-size:13.6px;font-weight:400;color:#545463;letter-spacing:0.231px;'>Projekt Truck</div>
<div class='t' style='left:411.32px;top:54.39px;line-height:16.32px;font-size:13.6px;font-weight:400;color:#545463;letter-spacing:0.000px;'>&bull;</div>
<div class='t' style='left:423.60px;top:54.39px;line-height:16.32px;font-size:13.6px;font-weight:400;color:#545463;letter-spacing:0.413px;'>Propozycje układowe</div>
<div class='t' style='left:567.12px;top:54.39px;line-height:16.32px;font-size:13.6px;font-weight:400;color:#545463;letter-spacing:0.000px;'>&bull;</div>
<div class='t' style='left:579.30px;top:54.51px;line-height:16.08px;font-size:13.4px;font-weight:700;color:#3c3c4c;letter-spacing:0.340px;'>Wstępna propozycja</div>
<div class='t' style='left:1839.20px;top:10.39px;line-height:16.32px;font-size:13.6px;font-weight:400;color:#2e2e3c;letter-spacing:-0.117px;'>00:00:00</div>
<div class='t' style='left:206.30px;top:98.49px;line-height:16.32px;font-size:13.6px;font-weight:400;color:#3a3a48;letter-spacing:0.513px;'>Podsumowanie</div>
<div class='t' style='left:331.50px;top:98.61px;line-height:16.08px;font-size:13.4px;font-weight:700;color:#1f7a72;letter-spacing:0.053px;'>Grupy wierzycieli</div>
<div class='t' style='left:468.00px;top:98.49px;line-height:16.32px;font-size:13.6px;font-weight:400;color:#3a3a48;letter-spacing:0.393px;'>Płatności jednorazowe</div>
<div class='t' style='left:638.00px;top:98.49px;line-height:16.32px;font-size:13.6px;font-weight:400;color:#3a3a48;letter-spacing:0.293px;'>Zestawienie dla wierzycieli</div>
<div class='t' style='left:831.30px;top:98.49px;line-height:16.32px;font-size:13.6px;font-weight:400;color:#3a3a48;letter-spacing:0.490px;'>Test prywatnego wierzyciela</div>
<div class='t' style='left:1038.80px;top:98.49px;line-height:16.32px;font-size:13.6px;font-weight:400;color:#3a3a48;letter-spacing:0.477px;'>Karty do głosowania</div>
<div class='t' style='left:1196.00px;top:98.49px;line-height:16.32px;font-size:13.6px;font-weight:400;color:#3a3a48;letter-spacing:0.437px;'>Wyniki głosowania</div>
<div class='t' style='left:235.80px;top:166.43px;line-height:15.84px;font-size:13.2px;font-weight:700;color:#1e1e2e;letter-spacing:0.192px;'>Miesięczne możliwości płatnicze</div>
<div class='t' style='left:235.80px;top:208.17px;line-height:15.96px;font-size:13.3px;font-weight:400;color:#33333f;letter-spacing:0.472px;'>Ustal na wykresie miesięczne możliwości płatnicze dłużnika, a następnie wybierz grupy dynamiczne poniżej.</div>
<div class='t' style='left:235.80px;top:227.07px;line-height:15.96px;font-size:13.3px;font-weight:400;color:#33333f;letter-spacing:0.594px;'>Wysokość rat dynamicznych jest ustalona na podstawie możliwości płatniczych, pomniejszonych o ustalone raty stałe w danym</div>
<div class='t' style='left:235.80px;top:245.87px;line-height:15.96px;font-size:13.3px;font-weight:400;color:#33333f;letter-spacing:0.405px;'>miesiącu. Raty stałe nie są ograniczone przez limit.</div>
<div class='t' style='left:1129.20px;top:180.03px;line-height:15.84px;font-size:13.2px;font-weight:700;color:#1e1e2e;letter-spacing:0.295px;'>Dynamiczna wysokość raty</div>
<div class='t' style='left:1154.60px;top:221.09px;line-height:16.32px;font-size:13.6px;font-weight:400;color:#3a3a48;letter-spacing:0.401px;'>Ustal ręcznie podział środków rat dynamicznych</div>
<div class='t' style='left:1129.20px;top:255.99px;line-height:16.32px;font-size:13.6px;font-weight:400;color:#b3b3c9;letter-spacing:0.462px;'>Wybierz które grupy mają mieć ratę dynamiczną, a następnie ustal podział dostępnych środków dla tych grup.</div>
<div class='t' style='left:1951.90px;top:220.99px;line-height:16.32px;font-size:13.6px;font-weight:400;color:#9c9cad;letter-spacing:0.054px;'>Ustal</div>
<div class='t' style='left:1943.80px;top:239.54px;line-height:16.32px;font-size:13.6px;font-weight:400;color:#9c9cad;letter-spacing:0.720px;'>podział</div>
<div class='t' style='left:1940.80px;top:258.09px;line-height:16.32px;font-size:13.6px;font-weight:400;color:#9c9cad;letter-spacing:0.462px;'>środków</div>
<div class='t' style='left:1959.56px;top:276.64px;line-height:16.32px;font-size:13.6px;font-weight:400;color:#9c9cad;letter-spacing:0.000px;'>rat</div>
<div class='t' style='left:1932.00px;top:295.19px;line-height:16.32px;font-size:13.6px;font-weight:400;color:#9c9cad;letter-spacing:0.752px;'>dynamiczn</div>
<div class='t' style='left:1956.92px;top:313.74px;line-height:16.32px;font-size:13.6px;font-weight:400;color:#9c9cad;letter-spacing:0.000px;'>ych</div>
<div class='t' style='left:1164.20px;top:295.13px;line-height:15.84px;font-size:13.2px;font-weight:700;color:#1e1e2e;letter-spacing:-0.007px;'>Grupa 1: Publicznoprawni</div>
<div class='t' style='left:1172.00px;top:323.89px;line-height:16.32px;font-size:13.6px;font-weight:400;color:#4a4a58;letter-spacing:0.569px;'>Rata dynamiczna</div>
<div class='t' style='left:1326.70px;top:323.89px;line-height:16.32px;font-size:13.6px;font-weight:400;color:#4a4a58;letter-spacing:0.476px;'>Rata stała</div>
<div class='t' style='left:1143.30px;top:355.99px;line-height:16.32px;font-size:13.6px;font-weight:400;color:#2b2b38;letter-spacing:0.262px;'>Kwota wierzytelności:</div>
<div class='t' style='left:1282.70px;top:356.23px;line-height:15.84px;font-size:13.2px;font-weight:700;color:#1e1e2e;letter-spacing:0.019px;'>41 000,00 zł</div>
<div class='t' style='left:1143.30px;top:385.89px;line-height:16.32px;font-size:13.6px;font-weight:400;color:#2b2b38;letter-spacing:0.198px;'>Liczba miesięcy:</div>
<div class='t' style='left:1258.70px;top:386.13px;line-height:15.84px;font-size:13.2px;font-weight:700;color:#1e1e2e;letter-spacing:0.000px;'>12</div>
<div class='t' style='left:1527.30px;top:355.99px;line-height:16.32px;font-size:13.6px;font-weight:400;color:#2b2b38;letter-spacing:0.315px;'>Wysokość raty miesięcznej:</div>
<div class='t' style='left:1705.00px;top:356.23px;line-height:15.84px;font-size:13.2px;font-weight:700;color:#1e1e2e;letter-spacing:-0.197px;'>3 416,67 zł</div>
<div class='t' style='left:1527.30px;top:385.89px;line-height:16.32px;font-size:13.6px;font-weight:400;color:#2b2b38;letter-spacing:0.435px;'>Opóźnienie spłaty (miesiące):</div>
<div class='t' style='left:1732.90px;top:386.13px;line-height:15.84px;font-size:13.2px;font-weight:700;color:#1e1e2e;letter-spacing:0.000px;'>0</div>
<div class='t' style='left:1164.50px;top:427.59px;line-height:16.32px;font-size:13.6px;font-weight:400;color:#1e1e2a;letter-spacing:0.555px;-webkit-text-stroke:0.25px #1e1e2a;'>Harmonogram spłaty (12 miesięcy)</div>
<div class='t' style='left:1164.20px;top:491.53px;line-height:15.84px;font-size:13.2px;font-weight:700;color:#1e1e2e;letter-spacing:0.019px;'>Grupa 2: Do 200 tys.</div>
<div class='t' style='left:1172.00px;top:520.29px;line-height:16.32px;font-size:13.6px;font-weight:400;color:#4a4a58;letter-spacing:0.569px;'>Rata dynamiczna</div>
<div class='t' style='left:1326.70px;top:520.29px;line-height:16.32px;font-size:13.6px;font-weight:400;color:#4a4a58;letter-spacing:0.476px;'>Rata stała</div>
<div class='t' style='left:1143.30px;top:552.39px;line-height:16.32px;font-size:13.6px;font-weight:400;color:#2b2b38;letter-spacing:0.262px;'>Kwota wierzytelności:</div>
<div class='t' style='left:1282.50px;top:552.63px;line-height:15.84px;font-size:13.2px;font-weight:700;color:#1e1e2e;letter-spacing:0.373px;'>80 000,00 zł</div>
<div class='t' style='left:1143.30px;top:582.29px;line-height:16.32px;font-size:13.6px;font-weight:400;color:#2b2b38;letter-spacing:0.397px;'>Minimalna wysokość raty:</div>
<div class='t' style='left:1313.00px;top:582.53px;line-height:15.84px;font-size:13.2px;font-weight:700;color:#1e1e2e;letter-spacing:0.318px;'>0,00 zł</div>
<div class='t' style='left:1527.30px;top:552.39px;line-height:16.32px;font-size:13.6px;font-weight:400;color:#2b2b38;letter-spacing:0.339px;'>Część budżetu miesięcznego:</div>
<div class='t' style='left:1720.20px;top:552.63px;line-height:15.84px;font-size:13.2px;font-weight:700;color:#1e1e2e;letter-spacing:0.000px;'>56%</div>
<div class='t' style='left:1527.30px;top:582.29px;line-height:16.32px;font-size:13.6px;font-weight:400;color:#2b2b38;letter-spacing:0.435px;'>Opóźnienie spłaty (miesiące):</div>
<div class='t' style='left:1732.90px;top:582.53px;line-height:15.84px;font-size:13.2px;font-weight:700;color:#1e1e2e;letter-spacing:0.000px;'>0</div>
<div class='t' style='left:1164.50px;top:623.89px;line-height:16.32px;font-size:13.6px;font-weight:400;color:#1e1e2a;letter-spacing:0.588px;-webkit-text-stroke:0.25px #1e1e2a;'>Harmonogram spłaty (19 miesięcy)</div>
<div class='t' style='left:1164.20px;top:687.73px;line-height:15.84px;font-size:13.2px;font-weight:700;color:#1e1e2e;letter-spacing:0.042px;'>Grupa 3: Powyżej 200 tys.</div>
<div class='t' style='left:1172.00px;top:716.49px;line-height:16.32px;font-size:13.6px;font-weight:400;color:#4a4a58;letter-spacing:0.569px;'>Rata dynamiczna</div>
<div class='t' style='left:1326.70px;top:716.49px;line-height:16.32px;font-size:13.6px;font-weight:400;color:#4a4a58;letter-spacing:0.476px;'>Rata stała</div>
<div class='t' style='left:1143.30px;top:748.59px;line-height:16.32px;font-size:13.6px;font-weight:400;color:#2b2b38;letter-spacing:0.262px;'>Kwota wierzytelności:</div>
<div class='t' style='left:1282.50px;top:748.83px;line-height:15.84px;font-size:13.2px;font-weight:700;color:#1e1e2e;letter-spacing:0.464px;'>450 000,00 zł</div>
<div class='t' style='left:1143.30px;top:778.49px;line-height:16.32px;font-size:13.6px;font-weight:400;color:#2b2b38;letter-spacing:0.397px;'>Minimalna wysokość raty:</div>
<div class='t' style='left:1313.00px;top:778.73px;line-height:15.84px;font-size:13.2px;font-weight:700;color:#1e1e2e;letter-spacing:0.318px;'>0,00 zł</div>
<div class='t' style='left:1527.30px;top:748.59px;line-height:16.32px;font-size:13.6px;font-weight:400;color:#2b2b38;letter-spacing:0.339px;'>Część budżetu miesięcznego:</div>
<div class='t' style='left:1720.20px;top:748.83px;line-height:15.84px;font-size:13.2px;font-weight:700;color:#1e1e2e;letter-spacing:0.000px;'>6%</div>
<div class='t' style='left:1527.30px;top:778.49px;line-height:16.32px;font-size:13.6px;font-weight:400;color:#2b2b38;letter-spacing:0.435px;'>Opóźnienie spłaty (miesiące):</div>
<div class='t' style='left:1732.90px;top:778.73px;line-height:15.84px;font-size:13.2px;font-weight:700;color:#1e1e2e;letter-spacing:0.000px;'>0</div>
<div class='t' style='left:1164.50px;top:819.79px;line-height:16.32px;font-size:13.6px;font-weight:400;color:#1e1e2a;letter-spacing:0.684px;-webkit-text-stroke:0.25px #1e1e2a;'>Harmonogram spłaty (60 miesięcy)</div>
<div class='t' style='left:1164.20px;top:883.93px;line-height:15.84px;font-size:13.2px;font-weight:700;color:#1e1e2e;letter-spacing:0.226px;'>Grupa 4: Wierzyciele z zabezpieczeniem</div>
<div class='t' style='left:1172.00px;top:912.69px;line-height:16.32px;font-size:13.6px;font-weight:400;color:#4a4a58;letter-spacing:0.569px;'>Rata dynamiczna</div>
<div class='t' style='left:1326.70px;top:912.69px;line-height:16.32px;font-size:13.6px;font-weight:400;color:#4a4a58;letter-spacing:0.476px;'>Rata stała</div>
<div class='t' style='left:1143.30px;top:944.79px;line-height:16.32px;font-size:13.6px;font-weight:400;color:#2b2b38;letter-spacing:0.262px;'>Kwota wierzytelności:</div>
<div class='t' style='left:1283.00px;top:945.03px;line-height:15.84px;font-size:13.2px;font-weight:700;color:#1e1e2e;letter-spacing:0.255px;'>320 000,00 zł</div>
<div class='t' style='left:1143.30px;top:974.69px;line-height:16.32px;font-size:13.6px;font-weight:400;color:#2b2b38;letter-spacing:0.397px;'>Minimalna wysokość raty:</div>
<div class='t' style='left:1313.00px;top:974.93px;line-height:15.84px;font-size:13.2px;font-weight:700;color:#1e1e2e;letter-spacing:0.284px;'>0,00 zł</div>
<div class='t' style='left:1527.30px;top:944.79px;line-height:16.32px;font-size:13.6px;font-weight:400;color:#2b2b38;letter-spacing:0.339px;'>Część budżetu miesięcznego:</div>
<div class='t' style='left:1720.20px;top:945.03px;line-height:15.84px;font-size:13.2px;font-weight:700;color:#1e1e2e;letter-spacing:0.000px;'>38%</div>
<div class='t' style='left:1527.30px;top:974.69px;line-height:16.32px;font-size:13.6px;font-weight:400;color:#2b2b38;letter-spacing:0.435px;'>Opóźnienie spłaty (miesiące):</div>
<div class='t' style='left:1732.90px;top:974.93px;line-height:15.84px;font-size:13.2px;font-weight:700;color:#1e1e2e;letter-spacing:0.000px;'>0</div>
<div class='t' style='left:1164.50px;top:1016.09px;line-height:16.32px;font-size:13.6px;font-weight:400;color:#1e1e2a;letter-spacing:0.588px;-webkit-text-stroke:0.25px #1e1e2a;'>Harmonogram spłaty (40 miesięcy)</div>
<div class='t' style='left:1030.40px;top:1090.63px;line-height:15.84px;font-size:13.2px;font-weight:700;color:#1f7a72;letter-spacing:0.055px;'>Wróć</div>
<div class='t' style='left:1117.30px;top:1090.63px;line-height:15.84px;font-size:13.2px;font-weight:700;color:#ffffff;letter-spacing:0.140px;'>Zapisz zmiany</div>

<!-- bottom white band -->
<div class="abs" style="left:0;top:1126px;width:2048px;height:8px;background:#fff;"></div>
</body></html>
